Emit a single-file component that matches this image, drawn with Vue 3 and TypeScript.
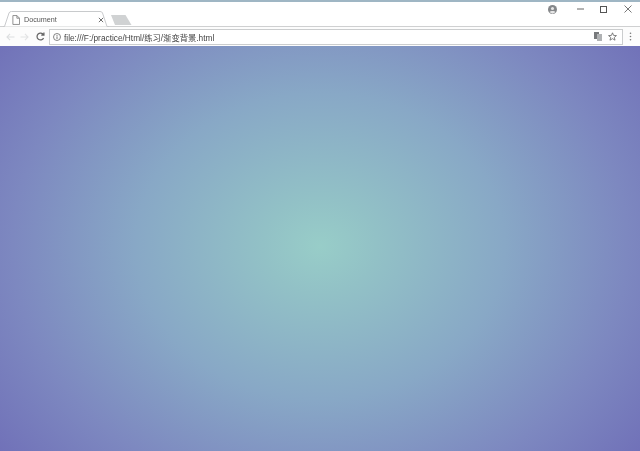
<script setup lang="ts">
const address = 'file:///F:/practice/Html/练习/渐变背景.html'
</script>

<template>
  <div class="browser">
    <div class="titlebar">
      <div class="tab">
        <svg class="tab-shape" width="106" height="16" viewBox="0 0 106 16">
          <path d="M0 15.5 H1.5 L6 2 Q6.5 .5 8.5 .5 H97 Q99 .5 99.5 2 L104 15.5 H106" fill="#fff" stroke="#c8cacc" />
        </svg>
        <svg class="doc" width="8" height="10" viewBox="0 0 9 11">
          <path d="M1 .5H5.5L8.5 3.5V10.5H1Z M5.5 .5V3.5H8.5" fill="none" stroke="#777" stroke-width=".9" />
        </svg>
        <span class="tab-title">Document</span>
        <svg class="tab-close" width="6" height="6" viewBox="0 0 7 7">
          <path d="M1 1L6 6M6 1L1 6" stroke="#666" stroke-width="1.1" />
        </svg>
      </div>
      <svg class="newtab" width="21" height="10" viewBox="0 0 21 10">
        <path d="M0 0H14.5L20.5 10H4Z" fill="#d0d2d3" />
      </svg>
      <div class="spacer"></div>
      <div class="controls">
        <svg class="profile" width="9" height="9" viewBox="0 0 10 10">
          <circle cx="5" cy="5" r="5" fill="#85878a" />
          <circle cx="5" cy="3.8" r="1.7" fill="#e6e6e6" />
          <path d="M1.8 8C2.6 6.4 7.4 6.4 8.2 8L5 9.6Z" fill="#e6e6e6" />
        </svg>
        <svg class="win min" width="7" height="2" viewBox="0 0 7 2"><path d="M0 1H7" stroke="#666" /></svg>
        <svg class="win max" width="7" height="7" viewBox="0 0 7 7"><rect x=".5" y=".5" width="6" height="6" fill="none" stroke="#555" /></svg>
        <svg class="win close" width="8" height="8" viewBox="0 0 8 8"><path d="M.5 .5L7.5 7.5M7.5 .5L.5 7.5" stroke="#777" /></svg>
      </div>
    </div>
    <div class="toolbar">
      <svg class="nav" width="9" height="8" viewBox="0 0 10 9"><path d="M9.5 4.5H1.2M4.5 1L1 4.5L4.5 8" fill="none" stroke="#dcdedf" stroke-width="1.2" /></svg>
      <svg class="nav" width="9" height="8" viewBox="0 0 10 9"><path d="M.5 4.5H8.8M5.5 1L9 4.5L5.5 8" fill="none" stroke="#e2e3e4" stroke-width="1.2" /></svg>
      <svg class="reload" width="9" height="9" viewBox="0 0 10 10"><path d="M8.4 6.6A3.8 3.8 0 1 1 8.2 3M8.8 .6V3.6H5.8" fill="none" stroke="#666" stroke-width="1.4" /></svg>
      <div class="omnibox">
        <svg width="8" height="8" viewBox="0 0 8 8" class="info">
          <circle cx="4" cy="4" r="3.5" fill="none" stroke="#666" stroke-width=".8" />
          <path d="M4 3.4V6M4 2V2.9" stroke="#666" stroke-width=".9" />
        </svg>
        <span class="url">{{ address }}</span>
        <div class="spacer"></div>
        <svg class="translate" width="8" height="9" viewBox="0 0 8 9">
          <rect width="5" height="7" fill="#77797c" />
          <rect x="3" y="2" width="5" height="7" fill="#b0b2b4" />
        </svg>
        <svg class="star" width="9" height="9" viewBox="0 0 10 10">
          <path d="M5 .9L6.2 3.8L9.4 4L7 6L7.8 9.1L5 7.4L2.2 9.1L3 6L.6 4L3.8 3.8Z" fill="none" stroke="#666" stroke-width=".9" />
        </svg>
      </div>
      <svg class="menu" width="3" height="9" viewBox="0 0 3 9">
        <circle cx="1.5" cy="1.2" r=".8" fill="#777" />
        <circle cx="1.5" cy="4.5" r=".8" fill="#777" />
        <circle cx="1.5" cy="7.8" r=".8" fill="#777" />
      </svg>
    </div>
    <main class="page"></main>
  </div>
</template>

<style>
html, body { margin: 0; padding: 0; }
</style>

<style scoped>
.browser {
  width: 640px;
  height: 451px;
  display: flex;
  flex-direction: column;
  overflow: hidden;
  font-family: "Liberation Sans", Arial, sans-serif;
  background: #fff;
}
.titlebar {
  height: 24px;
  flex: none;
  display: flex;
  align-items: flex-start;
  border-top: 2px solid #9fb6c4;
  background: #fff;
}
.tab {
  position: relative;
  width: 106px;
  height: 16px;
  margin: 9px 0 0 3px;
  display: flex;
  align-items: center;
  flex: none;
}
.tab-shape { position: absolute; left: 0; top: 0; }
.doc { position: relative; margin: 1px 0 0 9px; flex: none; }
.tab-title {
  position: relative;
  margin: 2px 0 0 4px;
  font-size: 7.2px;
  color: #555;
  line-height: 1;
  will-change: transform;
}
.tab-close { position: absolute; right: 5px; top: 6px; }
.newtab { margin: 13px 0 0 2px; flex: none; }
.spacer { flex: 1; }
.controls {
  display: flex;
  align-items: center;
  height: 14px;
  padding-right: 8px;
}
.profile { margin-right: 20px; flex: none; }
.win { flex: none; }
.max { margin-left: 16px; }
.close { margin-left: 17px; }
.toolbar {
  height: 19px;
  flex: none;
  display: flex;
  align-items: center;
  background: #fcfcfc;
  border-top: 1px solid #cfd0d1;
}
.nav { margin-left: 6px; flex: none; }
.nav + .nav { margin-left: 5px; }
.reload { margin-left: 7px; flex: none; }
.omnibox {
  height: 14px;
  width: 572px;
  margin-left: 4px;
  display: flex;
  align-items: center;
  background: #fff;
  border: 1px solid #cbcdce;
  flex: none;
}
.info { margin-left: 3px; flex: none; }
.url {
  margin-left: 3px;
  font-family: "Liberation Sans", "Noto Sans CJK SC", sans-serif;
  font-size: 8.3px;
  color: #444;
  white-space: nowrap;
  will-change: transform;
}
.translate { margin-right: 6px; flex: none; }
.star { margin-right: 5px; flex: none; }
.menu { margin-left: 6px; flex: none; }
.page {
  flex: 1;
  background: radial-gradient(ellipse 410px 340px at 320px 200px, #98cdc8 0%, #92c1c6 14%, #88a8c6 45%, #7d88c0 75%, #7070b8 100%);
}
</style>
